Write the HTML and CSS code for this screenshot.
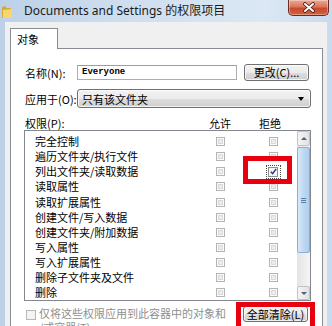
FILE: index.html
```html
<!DOCTYPE html>
<html lang="zh-CN">
<head>
  <meta charset="UTF-8">
  <title>Documents and Settings 的权限项目</title>
  <link rel="stylesheet" href="styles.css">
</head>
<body>
  <div class="window">
    <div class="titlebar">
      <svg class="folder-icon" width="10" height="12" viewBox="0 0 10 12">
        <path d="M0 1 L4 0 L4 2 L9 2 L9 12 L0 12 Z" fill="#d9a933"/>
        <path d="M1 4 L10 3 L10 12 L1 12 Z" fill="#f6d66e"/>
      </svg>
      <span class="title">Documents and Settings 的权限项目</span>
      <div class="close-btn">
        <svg width="14" height="11" viewBox="0 0 14 11">
          <path d="M3 2 L11 9 M11 2 L3 9" stroke="#4a1a12" stroke-width="3.6" stroke-linecap="round"/>
          <path d="M3 2 L11 9 M11 2 L3 9" stroke="#ffffff" stroke-width="2" stroke-linecap="round"/>
        </svg>
      </div>
    </div>

    <div class="dialog">
      <div class="tabs">
        <div class="tab">对象</div>
      </div>

      <div class="panel">
        <div class="field-row">
          <span class="field-label">名称(N):</span>
          <div class="textbox">Everyone</div>
          <button class="btn btn-change">更改(C)...</button>
        </div>

        <div class="field-row field-row-apply">
          <span class="field-label">应用于(O):</span>
          <div class="combo">
            <span>只有该文件夹</span>
            <span class="combo-arrow"></span>
          </div>
        </div>

        <div class="perm-header">
          <span class="perm-title">权限(P):</span>
          <span class="col">允许</span>
          <span class="col col-deny">拒绝</span>
        </div>

        <div class="perm-list">
          <div class="perm-rows">
            <div class="perm-row"><span class="perm-name">完全控制</span><span class="cell"><i class="cb"></i></span><span class="cell"><i class="cb"></i></span></div>
            <div class="perm-row"><span class="perm-name">遍历文件夹/执行文件</span><span class="cell"><i class="cb"></i></span><span class="cell"><i class="cb"></i></span></div>
            <div class="perm-row"><span class="perm-name">列出文件夹/读取数据</span><span class="cell"><i class="cb"></i></span><span class="cell"><span class="focus-rect"><i class="cb cb-checked"><svg width="7" height="7" viewBox="0 0 7 7"><path d="M0.8 3.6 L2.6 5.6 L6.2 0.8" fill="none" stroke="#25307a" stroke-width="1.4"/></svg></i></span></span></div>
            <div class="perm-row"><span class="perm-name">读取属性</span><span class="cell"><i class="cb"></i></span><span class="cell"><i class="cb"></i></span></div>
            <div class="perm-row"><span class="perm-name">读取扩展属性</span><span class="cell"><i class="cb"></i></span><span class="cell"><i class="cb"></i></span></div>
            <div class="perm-row"><span class="perm-name">创建文件/写入数据</span><span class="cell"><i class="cb"></i></span><span class="cell"><i class="cb"></i></span></div>
            <div class="perm-row"><span class="perm-name">创建文件夹/附加数据</span><span class="cell"><i class="cb"></i></span><span class="cell"><i class="cb"></i></span></div>
            <div class="perm-row"><span class="perm-name">写入属性</span><span class="cell"><i class="cb"></i></span><span class="cell"><i class="cb"></i></span></div>
            <div class="perm-row"><span class="perm-name">写入扩展属性</span><span class="cell"><i class="cb"></i></span><span class="cell"><i class="cb"></i></span></div>
            <div class="perm-row"><span class="perm-name">删除子文件夹及文件</span><span class="cell"><i class="cb"></i></span><span class="cell"><i class="cb"></i></span></div>
            <div class="perm-row"><span class="perm-name">删除</span><span class="cell"><i class="cb"></i></span><span class="cell"><i class="cb"></i></span></div>
          </div>

          <div class="scrollbar">
            <div class="sb-btn"><span class="sb-arrow up"></span></div>
            <div class="sb-thumb"><span class="grip"></span></div>
            <div class="sb-track"></div>
            <div class="sb-btn"><span class="sb-arrow down"></span></div>
          </div>

          <!-- 红框标注 -->
          <div class="mark mark-deny"></div>
        </div>

        <div class="bottom-row">
          <div class="inherit">
            <i class="cb cb-plain"></i>
            <span class="inherit-text">仅将这些权限应用到此容器中的对象和<br>/或容器(T)</span>
          </div>
          <div class="clear-wrap">
            <button class="btn btn-clear">全部清除(L)</button>
            <div class="mark mark-clear"></div>
          </div>
        </div>
      </div>
    </div>
  </div>
</body>
</html>
```

FILE: styles.css
```css
:root {
  --frame: #c6d8ec;
  --face: #f0f0f0;
  --tab-border: #898c95;
  --list-border: #828790;
  --red: #e8000e;
  --ui-font: "Noto Sans CJK SC", "Noto Sans", sans-serif;
}

* {
  margin: 0;
  padding: 0;
  box-sizing: border-box;
}

body {
  width: 332px;
  height: 326px;
  overflow: hidden;
  background: linear-gradient(90deg, #bcd1e8 0%, #cfdff0 40%, #dbe7f4 80%, #c9dbee 100%);
  font-family: var(--ui-font);
  font-size: 11px;
  color: #000;
}

.window {
  display: flex;
  flex-direction: column;
  height: 326px;
}

/* 标题栏 */
.titlebar {
  height: 22px;
  display: flex;
  align-items: flex-start;
}

.folder-icon {
  margin: 6px 0 0 2px;
}

.title {
  margin-left: 12px;
  line-height: 22px;
  font-family: "Noto Sans", "Noto Sans CJK SC", sans-serif;
  font-size: 12px;
  color: #1b1b1b;
  white-space: nowrap;
}

.close-btn {
  margin-left: auto;
  margin-right: 3px;
  width: 41px;
  height: 16px;
  border: 1px solid #6b2a22;
  border-top: none;
  border-radius: 0 0 5px 5px;
  background: linear-gradient(180deg, #eaa896 0%, #dc7659 45%, #c84a2c 55%, #d3603e 100%);
  box-shadow: inset 0 0 0 1px rgba(255, 255, 255, 0.35);
  display: flex;
  align-items: center;
  justify-content: center;
}

/* 对话框主体 */
.dialog {
  flex: 1;
  margin: 0 5px;
  background: var(--face);
  padding: 6px 4px 0 5px;
  display: flex;
  flex-direction: column;
}

.tabs {
  display: flex;
}

.tab {
  width: 48px;
  height: 21px;
  margin-bottom: -1px;
  padding-left: 6px;
  line-height: 20px;
  background: #fff;
  border: 1px solid var(--tab-border);
  border-bottom: none;
  position: relative;
  z-index: 1;
}

.panel {
  flex: 1;
  background: #fff;
  border: 1px solid var(--tab-border);
  padding: 15px 11px 0 13px;
  overflow: hidden;
}

.field-row {
  display: flex;
  align-items: center;
  height: 17px;
}

.field-row-apply {
  margin-top: 8px;
  height: 19px;
}

.field-label {
  width: 53px;
  padding-left: 1px;
  white-space: nowrap;
}

.textbox {
  width: 160px;
  height: 15px;
  border: 1px solid #abadb3;
  border-top-color: #9a9ea8;
  padding-left: 4px;
  font-family: "Liberation Mono", monospace;
  font-weight: bold;
  font-size: 9px;
  line-height: 13px;
}

.btn {
  font-family: var(--ui-font);
  font-size: 11px;
  color: #000;
  border: 1px solid #707070;
  border-radius: 3px;
  background: linear-gradient(180deg, #f2f2f2 0%, #ebebeb 50%, #dddddd 51%, #cfcfcf 100%);
  box-shadow: inset 0 0 0 1px rgba(255, 255, 255, 0.7);
  line-height: 13px;
}

.btn-change {
  margin-left: 7px;
  width: 65px;
  height: 17px;
}

.combo {
  width: 234px;
  height: 19px;
  border: 1px solid #707070;
  border-radius: 3px;
  background: linear-gradient(180deg, #f2f2f2 0%, #ebebeb 50%, #dddddd 51%, #cfcfcf 100%);
  box-shadow: inset 0 0 0 1px rgba(255, 255, 255, 0.7);
  display: flex;
  align-items: center;
  padding: 0 6px 0 4px;
  font-size: 11px;
}

.combo-arrow {
  margin-left: auto;
  width: 0;
  height: 0;
  border-left: 3.5px solid transparent;
  border-right: 3.5px solid transparent;
  border-top: 4px solid #000;
}

/* 权限列表 */
.perm-header {
  margin-top: 8px;
  height: 14px;
  line-height: 14px;
  display: grid;
  grid-template-columns: 1fr 48px 48px;
  column-gap: 5px;
  padding: 0 14px 0 1px;
}

.perm-header .col {
  text-align: center;
}

.perm-header .col-deny {
  padding-right: 6px;
}

.perm-list {
  position: relative;
  height: 171px;
  border: 1px solid var(--list-border);
  display: flex;
  overflow: hidden;
}

.perm-rows {
  flex: 1;
  padding-top: 3px;
}

.perm-row {
  height: 15.15px;
  display: grid;
  grid-template-columns: 1fr 48px 48px;
  column-gap: 5px;
  align-items: center;
}

.perm-name {
  padding-left: 10px;
  line-height: 15px;
  white-space: nowrap;
}

.cell {
  display: flex;
  justify-content: center;
  align-items: center;
}

.cb {
  display: block;
  width: 9px;
  height: 9px;
  border: 1px solid #b4b4b4;
  background: linear-gradient(135deg, #e2e2e2, #f6f6f6);
  box-shadow: inset 0 0 0 1px #fafafa, inset 0 0 0 2px #dadada;
}

.focus-rect {
  display: flex;
  align-items: center;
  justify-content: center;
  width: 15px;
  height: 14px;
  border: 1px dotted #444;
}

.cb-checked {
  width: 10px;
  height: 10px;
  border-color: #8e8f8f;
  background: #f4f4f4;
  box-shadow: none;
  display: flex;
  align-items: center;
  justify-content: center;
}

/* 滚动条 */
.scrollbar {
  width: 13px;
  display: flex;
  flex-direction: column;
  background: linear-gradient(90deg, #e4e4e4, #f5f5f5);
}

.sb-btn {
  height: 15px;
  border: 1px solid #c3c3c3;
  border-radius: 2px;
  background: linear-gradient(90deg, #f4f4f4, #e2e2e2);
  display: flex;
  align-items: center;
  justify-content: center;
}

.sb-btn:last-child {
  height: 14px;
}

.sb-arrow {
  width: 0;
  height: 0;
  border-left: 3px solid transparent;
  border-right: 3px solid transparent;
}

.sb-arrow.up {
  border-bottom: 3px solid #4d6185;
}

.sb-arrow.down {
  border-top: 3px solid #4d6185;
}

.sb-thumb {
  margin-top: 1px;
  height: 106px;
  border: 1px solid #8eafd2;
  border-radius: 2px;
  background: linear-gradient(90deg, #d9eafa 0%, #bfd9f3 50%, #aecdee 100%);
  display: flex;
  align-items: center;
  justify-content: center;
}

.grip {
  width: 5px;
  height: 5px;
  border-top: 1px solid #5b7ea8;
  border-bottom: 1px solid #5b7ea8;
  background: linear-gradient(180deg, transparent 1px, #5b7ea8 1px, #5b7ea8 2px, transparent 2px);
}

.sb-track {
  flex: 1;
}

/* 红色标注框 */
.mark {
  position: absolute;
  border: 5px solid var(--red);
}

.mark-deny {
  left: 218px;
  top: 25px;
  width: 49px;
  height: 28px;
}

/* 底部 */
.bottom-row {
  margin-top: 5px;
  display: flex;
  justify-content: space-between;
  align-items: flex-start;
}

.inherit {
  display: flex;
  align-items: flex-start;
  margin-left: 2px;
}

.cb-plain {
  margin-top: 4px;
  width: 10px;
  height: 10px;
  background: #f4f4f4;
  border-color: #b8b8b8;
  box-shadow: none;
}

.inherit-text {
  margin-left: 3px;
  line-height: 14px;
  color: #8f8f8f;
  font-size: 11px;
  white-space: nowrap;
}

.clear-wrap {
  position: relative;
  margin-right: 3px;
}

.btn-clear {
  display: block;
  width: 65px;
  height: 16px;
}

.mark-clear {
  left: -7px;
  top: -4px;
  width: 79px;
  height: 34px;
}
```
